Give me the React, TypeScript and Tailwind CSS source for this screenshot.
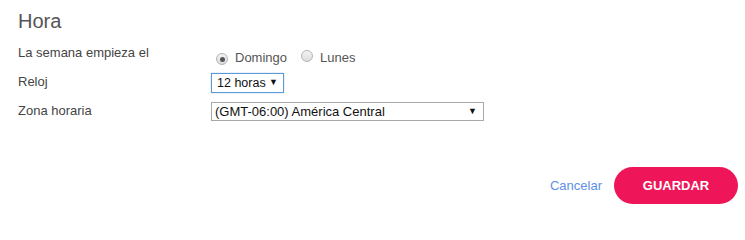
import React from "react";

function Radio({ checked }: { checked: boolean }) {
  return (
    <span className="inline-flex h-[12px] w-[12px] items-center justify-center rounded-full border border-[#b5b5b5] bg-gradient-to-b from-[#f4f4f4] to-[#dcdcdc]">
      {checked && <span className="h-[5px] w-[5px] rounded-full bg-[#555]" />}
    </span>
  );
}

export default function App() {
  return (
    <div className="relative h-[212px] w-[745px] bg-white font-['Liberation_Sans',Arial,sans-serif] text-[13px] text-[#444]">
      <div className="pl-[18px] pt-[9px]">
        <h1 className="text-[20px] leading-[24px] text-[#555]">Hora</h1>
        <div className="mt-[12px] flex h-[16px] items-center">
          <div className="w-[193px]">La semana empieza el</div>
          <div className="mt-[9px] flex items-center">
            <span className="ml-[5px]"><Radio checked /></span>
            <span className="ml-[7px] text-[#555]">Domingo</span>
            <span className="ml-[14px]"><Radio checked={false} /></span>
            <span className="ml-[7px] text-[#555]">Lunes</span>
          </div>
        </div>
        <div className="mt-[12px] flex items-center">
          <div className="-mt-[2px] w-[193px]">Reloj</div>
          <div className="flex h-[20px] w-[73px] items-center justify-between border border-[#5b9bd5] pl-[5px] pr-[5px] text-[#111] shadow-[0_0_1px_#7fb3e8]">
            <span className="text-[12.5px]">12 horas</span>
            <span className="text-[9px]">▼</span>
          </div>
        </div>
        <div className="mt-[9px] flex items-center">
          <div className="-mt-[1px] w-[193px]">Zona horaria</div>
          <div className="flex h-[19px] w-[273px] items-center justify-between border border-[#a9a9a9] pl-[3px] pr-[6px] text-[#111]">
            <span>(GMT-06:00) América Central</span>
            <span className="text-[9px]">▼</span>
          </div>
        </div>
      </div>
      <div className="absolute right-[7px] top-[167px] flex items-center">
        <span className="mr-[12px] text-[13px] text-[#5e90e8]">Cancelar</span>
        <button className="h-[37px] w-[124px] rounded-full bg-[#ee1558] text-[13px] font-bold text-white">GUARDAR</button>
      </div>
    </div>
  );
}
